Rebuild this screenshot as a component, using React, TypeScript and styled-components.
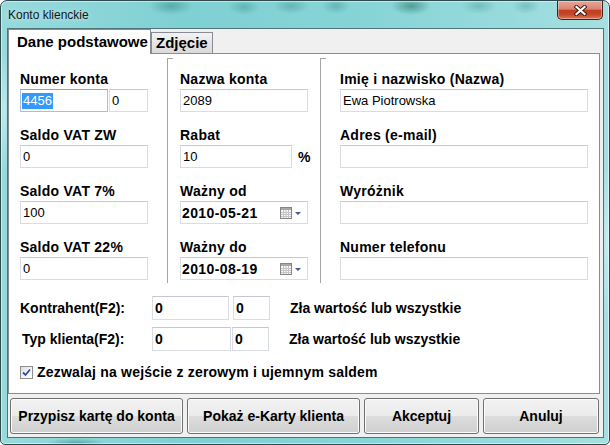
import React from 'react';
import styled, { createGlobalStyle } from 'styled-components';

const GlobalStyle = createGlobalStyle`
  html, body {
    margin: 0;
    padding: 0;
    background: #ffffff;
  }
  body {
    font-family: 'Liberation Sans', Arial, sans-serif;
  }
`;

const Window = styled.div`
  box-sizing: border-box;
  width: 610px;
  height: 445px;
  display: flex;
  flex-direction: column;
  padding: 0 5px 6px 6px;
  border: 1px solid #2f4a4d;
  border-radius: 7px 7px 5px 5px;
  background:
    radial-gradient(ellipse 22px 9px at 170px 5px, rgba(40, 125, 115, 0.45), transparent),
    radial-gradient(ellipse 16px 8px at 243px 6px, rgba(40, 125, 115, 0.35), transparent),
    radial-gradient(ellipse 18px 8px at 290px 5px, rgba(40, 125, 115, 0.35), transparent),
    radial-gradient(ellipse 14px 8px at 335px 5px, rgba(40, 125, 115, 0.35), transparent),
    radial-gradient(ellipse 20px 9px at 410px 5px, rgba(30, 110, 95, 0.55), transparent),
    radial-gradient(ellipse 18px 8px at 478px 5px, rgba(40, 125, 115, 0.3), transparent),
    radial-gradient(ellipse 14px 8px at 525px 5px, rgba(40, 125, 115, 0.3), transparent),
    radial-gradient(ellipse 30px 5px at 75px 442px, rgba(40, 110, 110, 0.45), transparent),
    radial-gradient(ellipse 8px 60px at 3px 110px, rgba(230, 250, 250, 0.5), transparent),
    radial-gradient(ellipse 6px 80px at 606px 240px, rgba(230, 250, 250, 0.5), transparent),
    linear-gradient(90deg, #97dadc 0%, #7fd0d3 30%, #86d4d6 60%, #a5dfe1 100%);
  box-shadow: inset 0 0 0 1px rgba(255, 255, 255, 0.5);
  overflow: hidden;
`;

const TitleBar = styled.div`
  height: 27px;
  display: flex;
  align-items: center;
  padding-left: 1px;
`;

const Title = styled.span`
  font: 12px 'Liberation Sans', Arial, sans-serif;
  color: #101818;
  text-shadow: 0 0 6px rgba(255, 255, 255, 0.7);
`;

const CloseButton = styled.div`
  box-sizing: border-box;
  align-self: flex-start;
  margin-left: auto;
  margin-right: 1px;
  width: 46px;
  height: 19px;
  display: flex;
  align-items: center;
  justify-content: center;
  border: 1px solid #4a2018;
  border-top: none;
  border-radius: 0 0 5px 5px;
  background: linear-gradient(180deg, #e7a696 0%, #d98470 45%, #c13f22 52%, #c6472b 75%, #d87a55 100%);
  box-shadow: inset 0 0 0 1px rgba(255, 255, 255, 0.35);
`;

const Client = styled.div`
  flex: 1;
  display: flex;
  flex-direction: column;
  background: #f0f0f0;
  border: 1px solid #4e7477;
`;

const TabStrip = styled.div`
  height: 24px;
  display: flex;
  align-items: flex-end;
`;

const Tab = styled.div<{ $active?: boolean }>`
  box-sizing: border-box;
  position: relative;
  z-index: ${p => (p.$active ? 2 : 1)};
  height: ${p => (p.$active ? '25px' : '21px')};
  margin-bottom: ${p => (p.$active ? '-1px' : '0')};
  width: ${p => (p.$active ? '143px' : '62px')};
  padding-left: ${p => (p.$active ? '8px' : '4px')};
  padding-top: ${p => (p.$active ? '3px' : '1px')};
  border: 1px solid #898c95;
  border-bottom: none;
  background: ${p => (p.$active ? '#ffffff' : 'linear-gradient(180deg, #f3f3f3 0%, #e6e6e6 50%, #d9d9d9 100%)')};
  font: bold 15px/18px 'Liberation Sans', Arial, sans-serif;
  color: #000;
  white-space: nowrap;
`;

const Panel = styled.div`
  box-sizing: border-box;
  height: 341px;
  margin-right: 3px;
  padding: 4px 0 0 11px;
  border: 1px solid #898c95;
  background: #ffffff;
`;

const Columns = styled.div`
  display: grid;
  grid-template-columns: 147px 153px 1fr;
  height: 225px;
`;

const Column = styled.div<{ $divided?: boolean; $indent: number; $fieldW: number }>`
  position: relative;
  display: flex;
  flex-direction: column;
  gap: 15px;
  padding: 13px 0 0 ${p => p.$indent}px;
  border-left: ${p => (p.$divided ? '1px solid #a5a5a5' : 'none')};

  &::before {
    content: '';
    display: ${p => (p.$divided ? 'block' : 'none')};
    position: absolute;
    top: 0;
    left: 0;
    width: 5px;
    border-top: 1px solid #a5a5a5;
  }

  & > div {
    width: ${p => p.$fieldW}px;
  }
`;

const Field = styled.div`
  display: flex;
  flex-direction: column;
  gap: 2px;
`;

const Label = styled.label`
  font: bold 14px/16px 'Liberation Sans', Arial, sans-serif;
  letter-spacing: 0.25px;
  color: #000;
  white-space: nowrap;
`;

const TextInput = styled.input<{ $w?: number; $bold?: boolean }>`
  box-sizing: border-box;
  width: ${p => (p.$w ? `${p.$w}px` : '100%')};
  height: ${p => (p.$bold ? '24px' : '23px')};
  margin: 0;
  padding: 0 2px;
  border: 1px solid #d9dde2;
  border-top-color: #c4c8ce;
  background: #ffffff;
  font: ${p => (p.$bold ? 'bold 14px' : '13px')} 'Liberation Sans', Arial, sans-serif;
  color: #000;
  outline: none;
`;

const InputRow = styled.div`
  display: flex;
  align-items: center;
  gap: 1px;
`;

const FocusedBox = styled.div`
  box-sizing: border-box;
  width: 88px;
  height: 23px;
  display: flex;
  align-items: center;
  padding-left: 1px;
  border: 1px solid #a9bfd9;
  border-top-color: #8aa6c8;
  background: #ffffff;
`;

const Selection = styled.span`
  padding: 0 1px;
  background: #3399ff;
  color: #ffffff;
  font: 13px/16px 'Liberation Sans', Arial, sans-serif;
`;

const Unit = styled.span`
  margin-left: 5px;
  font: bold 14px 'Liberation Sans', Arial, sans-serif;
  color: #000;
`;

const DateBox = styled.div`
  box-sizing: border-box;
  height: 23px;
  display: flex;
  align-items: center;
  padding: 0 6px 0 1px;
  border: 1px solid #d9dde2;
  border-top-color: #c4c8ce;
  background: #ffffff;
  font: bold 14px 'Liberation Sans', Arial, sans-serif;
  letter-spacing: 0.4px;
  color: #000;

  & > svg {
    margin-left: auto;
  }
`;

const Lower = styled.div`
  display: flex;
  flex-direction: column;
  padding-top: 13px;
`;

const FilterRow = styled.div<{ $gapAfter: number }>`
  display: flex;
  align-items: center;
  margin-bottom: ${p => p.$gapAfter}px;
`;

const RowLabel = styled.span<{ $indent?: number }>`
  box-sizing: border-box;
  width: 132px;
  padding-left: ${p => p.$indent || 0}px;
  font: bold 14px 'Liberation Sans', Arial, sans-serif;
  color: #000;
`;

const RowNote = styled.span`
  margin-left: 20px;
  font: bold 14px 'Liberation Sans', Arial, sans-serif;
  color: #000;
`;

const CheckRow = styled.label`
  display: flex;
  align-items: center;
  gap: 4px;
  font: bold 14px 'Liberation Sans', Arial, sans-serif;
  letter-spacing: 0.2px;
  color: #000;
`;

const CheckBox = styled.span`
  box-sizing: border-box;
  width: 13px;
  height: 13px;
  display: flex;
  align-items: center;
  justify-content: center;
  border: 1px solid #8e8f8f;
  background: linear-gradient(135deg, #dcdcdc 0%, #f7f7f7 60%, #ffffff 100%);
`;

const ButtonRow = styled.div`
  display: flex;
  gap: 4px;
  padding: 4px 0 0 2px;
`;

const Button = styled.button<{ $w: number }>`
  box-sizing: border-box;
  width: ${p => p.$w}px;
  height: 36px;
  padding: 0;
  border: 1px solid #707070;
  border-radius: 3px;
  background: linear-gradient(180deg, #f2f2f2 0%, #ebebeb 49%, #dddddd 50%, #cfcfcf 100%);
  box-shadow: inset 0 0 0 1px #fcfcfc;
  font: bold 14px 'Liberation Sans', Arial, sans-serif;
  color: #000;
`;

const CloseGlyph = () => (
  <svg width="13" height="11" viewBox="0 0 13 11">
    <path d="M2.5 2 L10.5 9 M10.5 2 L2.5 9" stroke="#3a1a14" strokeWidth="4" strokeLinecap="square" />
    <path d="M2.5 2 L10.5 9 M10.5 2 L2.5 9" stroke="#ffffff" strokeWidth="2.2" strokeLinecap="square" />
  </svg>
);

const CalendarGlyph = () => (
  <svg width="21" height="12" viewBox="0 0 21 12">
    <rect x="0.5" y="0.5" width="11" height="11" fill="#f6f6f6" stroke="#858585" />
    <rect x="1" y="1" width="10" height="2" fill="#a8a8a8" />
    <path d="M1 5.5 H11 M1 7.5 H11 M1 9.5 H11 M3.5 3 V11 M6 3 V11 M8.5 3 V11" stroke="#c4c4c4" strokeWidth="1" />
    <path d="M15 5 H21 L18 8 Z" fill="#3d5a8c" />
  </svg>
);

const CheckGlyph = () => (
  <svg width="9" height="9" viewBox="0 0 9 9">
    <path d="M1 4.5 L3.5 7 L8 1.5" fill="none" stroke="#2b52a8" strokeWidth="1.8" />
  </svg>
);

const App: React.FC = () => {
  return (
    <>
      <GlobalStyle />
      <Window>
        <TitleBar>
          <Title>Konto klienckie</Title>
          <CloseButton>
            <CloseGlyph />
          </CloseButton>
        </TitleBar>
        <Client>
          <TabStrip>
            <Tab $active>Dane podstawowe</Tab>
            <Tab>Zdjęcie</Tab>
          </TabStrip>
          <Panel>
            <Columns>
              <Column $indent={0} $fieldW={128}>
                <Field>
                  <Label>Numer konta</Label>
                  <InputRow>
                    <FocusedBox>
                      <Selection>4456</Selection>
                    </FocusedBox>
                    <TextInput $w={39} defaultValue="0" />
                  </InputRow>
                </Field>
                <Field>
                  <Label>Saldo VAT ZW</Label>
                  <TextInput defaultValue="0" />
                </Field>
                <Field>
                  <Label>Saldo VAT 7%</Label>
                  <TextInput defaultValue="100" />
                </Field>
                <Field>
                  <Label>Saldo VAT 22%</Label>
                  <TextInput defaultValue="0" />
                </Field>
              </Column>
              <Column $divided $indent={12} $fieldW={128}>
                <Field>
                  <Label>Nazwa konta</Label>
                  <TextInput defaultValue="2089" />
                </Field>
                <Field>
                  <Label>Rabat</Label>
                  <InputRow>
                    <TextInput $w={112} defaultValue="10" />
                    <Unit>%</Unit>
                  </InputRow>
                </Field>
                <Field>
                  <Label>Ważny od</Label>
                  <DateBox>
                    2010-05-21
                    <CalendarGlyph />
                  </DateBox>
                </Field>
                <Field>
                  <Label>Ważny do</Label>
                  <DateBox>
                    2010-08-19
                    <CalendarGlyph />
                  </DateBox>
                </Field>
              </Column>
              <Column $divided $indent={19} $fieldW={248}>
                <Field>
                  <Label>Imię i nazwisko (Nazwa)</Label>
                  <TextInput defaultValue="Ewa Piotrowska" />
                </Field>
                <Field>
                  <Label>Adres (e-mail)</Label>
                  <TextInput defaultValue="" />
                </Field>
                <Field>
                  <Label>Wyróżnik</Label>
                  <TextInput defaultValue="" />
                </Field>
                <Field>
                  <Label>Numer telefonu</Label>
                  <TextInput defaultValue="" />
                </Field>
              </Column>
            </Columns>
            <Lower>
              <FilterRow $gapAfter={7}>
                <RowLabel>Kontrahent(F2):</RowLabel>
                <InputRow>
                  <TextInput $w={77} $bold defaultValue="0" />
                  <TextInput $w={37} $bold defaultValue="0" style={{ marginLeft: 3 }} />
                </InputRow>
                <RowNote>Zła wartość lub wszystkie</RowNote>
              </FilterRow>
              <FilterRow $gapAfter={13}>
                <RowLabel $indent={2}>Typ klienta(F2):</RowLabel>
                <InputRow>
                  <TextInput $w={79} $bold defaultValue="0" />
                  <TextInput $w={37} $bold defaultValue="0" />
                </InputRow>
                <RowNote>Zła wartość lub wszystkie</RowNote>
              </FilterRow>
              <CheckRow>
                <CheckBox>
                  <CheckGlyph />
                </CheckBox>
                Zezwalaj na wejście z zerowym i ujemnym saldem
              </CheckRow>
            </Lower>
          </Panel>
          <ButtonRow>
            <Button $w={173}>Przypisz kartę do konta</Button>
            <Button $w={173}>Pokaż e-Karty klienta</Button>
            <Button $w={115}>Akceptuj</Button>
            <Button $w={116}>Anuluj</Button>
          </ButtonRow>
        </Client>
      </Window>
    </>
  );
};

export default App;
